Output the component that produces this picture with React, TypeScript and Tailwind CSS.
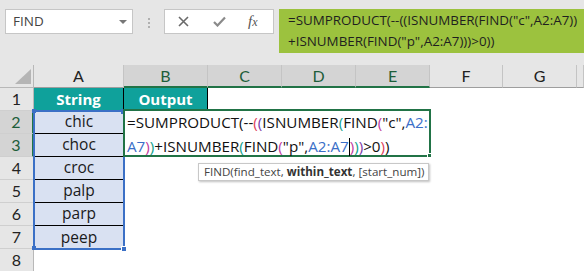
import React from 'react';

const cols = ['A', 'B', 'C', 'D', 'E', 'F', 'G', ''];
const activeCols = ['B', 'C', 'D', 'E'];
const words = ['chic', 'choc', 'croc', 'palp', 'parp', 'peep'];

const P1 = 'text-[#e0405a]';
const P2 = 'text-[#7a3aa8]';
const P3 = 'text-[#10a08a]';
const P4 = 'text-[#c03a9e]';
const REF = 'text-[#3a6fc8]';

const ColHeader: React.FC<{ label: string }> = ({ label }) => {
  const active = activeCols.includes(label);
  return (
    <div
      className={`flex items-center justify-center border-r border-[#c4c4c4] text-[16px] ${
        active
          ? 'bg-[#d4d4d4] border-b-2 border-b-[#217346] text-[#1d5e3a]'
          : 'bg-[#e6e6e6] border-b border-b-[#9e9e9e] text-[#222]'
      }`}
    >
      {label}
    </div>
  );
};

const RowHeader: React.FC<{ n: number }> = ({ n }) => {
  const active = n === 2 || n === 3;
  return (
    <div
      className={`flex items-center justify-center border-b border-[#cfcfcf] text-[16px] ${
        active
          ? 'bg-[#d4d4d4] border-r-2 border-r-[#217346] text-[#1d5e3a]'
          : 'bg-[#e6e6e6] border-r border-r-[#b8b8b8] text-[#222]'
      }`}
    >
      {n}
    </div>
  );
};

const cellFont = { fontFamily: '"Open Sans", sans-serif' };

export default function App() {
  return (
    <div
      className="relative w-[584px] h-[271px] overflow-hidden bg-white"
      style={{ fontFamily: 'Lato, "Open Sans", sans-serif' }}
    >
      {/* Formula bar area */}
      <div className="flex h-[65px] bg-[#e6e6e6] pt-[9px] pl-[5px]" style={cellFont}>
        <div className="flex h-[25px] w-[128px] shrink-0 items-center justify-between border border-[#c6c6c6] bg-white pl-[7px] pr-[5px] text-[13.5px] text-[#444]">
          <span>FIND</span>
          <span className="h-0 w-0 border-x-[4px] border-t-[4px] border-x-transparent border-t-[#777]" />
        </div>
        <div className="flex w-[31px] shrink-0 flex-col items-center gap-[2px] pt-[9px]">
          <span className="h-[2px] w-[2px] bg-[#b0b0b0]" />
          <span className="h-[2px] w-[2px] bg-[#b0b0b0]" />
          <span className="h-[2px] w-[2px] bg-[#b0b0b0]" />
        </div>
        <div className="flex h-[25px] w-[110px] shrink-0 items-center border border-[#c6c6c6] bg-white">
          <svg className="ml-[13px]" width="11" height="11" viewBox="0 0 11 11">
            <path d="M1 1L10 10M10 1L1 10" stroke="#6a6a6a" strokeWidth="1.6" />
          </svg>
          <svg className="ml-[24px]" width="13" height="11" viewBox="0 0 13 11">
            <path d="M1 6L4.5 9.5L12 1.5" stroke="#8a8a8a" strokeWidth="2.2" fill="none" />
          </svg>
          <span
            className="ml-[22px] text-[15px] italic text-[#555]"
            style={{ fontFamily: '"Liberation Serif", serif' }}
          >
            f<span className="text-[12px]">x</span>
          </span>
        </div>
        <div className="ml-[5px] h-[44px] min-w-0 flex-1 overflow-hidden bg-[#9cc23e] pl-[9px] pt-[1px] text-[13.4px] leading-[21px] text-[#1f1f1f]">
          <div className="whitespace-nowrap">=SUMPRODUCT(--((ISNUMBER(FIND("c",A2:A7))</div>
          <div className="whitespace-nowrap">+ISNUMBER(FIND("p",A2:A7)))&gt;0))</div>
        </div>
      </div>

      {/* Sheet */}
      <div className="relative">
        <div className="grid grid-cols-[34px_90px_84px_74px_74px_74px_73px_74px_1fr] grid-rows-[23px_repeat(8,23px)]">
          {/* header row */}
          <div className="relative border-r border-b border-[#b8b8b8] bg-[#e6e6e6]">
            <svg className="absolute bottom-[3px] right-[2px]" width="16" height="15" viewBox="0 0 16 15">
              <path d="M16 0L16 15L0 15Z" fill="#b5b5b5" />
            </svg>
          </div>
          {cols.map((c, i) => (
            <ColHeader key={i} label={c} />
          ))}

          {/* row 1 */}
          <RowHeader n={1} />
          <div
            className="flex items-center justify-center border-r border-black bg-[#0fa19b] text-[15px] font-bold text-white"
            style={cellFont}
          >
            String
          </div>
          <div
            className="flex items-center justify-center border-r border-black bg-[#0fa19b] text-[15px] font-bold text-white"
            style={cellFont}
          >
            Output
          </div>
          {[0, 1, 2, 3, 4, 5].map((k) => (
            <div key={k} className="bg-white" />
          ))}

          {/* rows 2 - 8 */}
          {[2, 3, 4, 5, 6, 7, 8].map((n) => (
            <React.Fragment key={n}>
              <RowHeader n={n} />
              {n <= 7 ? (
                <div
                  className={`flex items-center justify-center bg-[#d9e1f2] text-[15.5px] text-[#1a1a1a] ${
                    n < 7 ? 'border-b border-black' : ''
                  }`}
                  style={cellFont}
                >
                  {words[n - 2]}
                </div>
              ) : (
                <div className="bg-white" />
              )}
              {[0, 1, 2, 3, 4, 5, 6].map((k) => (
                <div key={k} className="bg-white" />
              ))}
            </React.Fragment>
          ))}
        </div>

        {/* selection A2:A7 */}
        <div className="pointer-events-none absolute left-[33px] top-[45px] h-[140px] w-[92px] border-2 border-[#3b70c6]" />
        <span className="absolute left-[32px] top-[44px] h-[4px] w-[4px] bg-[#3b70c6]" />
        <span className="absolute left-[121px] top-[44px] h-[5px] w-[5px] bg-[#3b70c6]" />
        <span className="absolute left-[32px] top-[181px] h-[4px] w-[4px] bg-[#3b70c6]" />
        <span className="absolute left-[121px] top-[181px] h-[6px] w-[6px] border border-white bg-[#3b70c6]" />

        {/* edit box B2:E3 */}
        <div
          className="absolute left-[123px] top-[44px] h-[48px] w-[308px] border-2 border-[#217346] bg-white pl-[2px] text-[15.2px] leading-[23px] text-[#111]"
          style={cellFont}
        >
          <div className="whitespace-nowrap">
            =SUMPRODUCT(--<span className={P1}>(</span>
            <span className={P2}>(</span>ISNUMBER<span className={P3}>(</span>FIND
            <span className={P4}>(</span>"c",<span className={REF}>A2:</span>
          </div>
          <div className="whitespace-nowrap">
            <span className={REF}>A7</span>
            <span className={P4}>)</span>
            <span className={P3}>)</span>+ISNUMBER<span className={P3}>(</span>FIND
            <span className={P4}>(</span>"p",<span className={REF}>A2:A7</span>
            <span className="inline-block h-[18px] w-[1px] translate-y-[4px] bg-black" />
            <span className={P4}>)</span>
            <span className={P3}>)</span>
            <span className={P2}>)</span>&gt;0<span className={P1}>)</span>)
          </div>
          <span className="absolute -bottom-[3px] -right-[3px] h-[5px] w-[5px] border border-white bg-[#217346]" />
        </div>

        {/* tooltip */}
        <div
          className="absolute left-[198px] top-[98px] h-[18px] w-[231px] whitespace-nowrap border border-[#c8c8c8] bg-white pl-[5px] text-[11.6px] leading-[16px] text-[#444] shadow-[1px_1px_2px_rgba(0,0,0,0.25)]"
          style={cellFont}
        >
          FIND(find_text, <b className="font-bold text-[#333]">within_text</b>, [start_num])
        </div>
      </div>
    </div>
  );
}
